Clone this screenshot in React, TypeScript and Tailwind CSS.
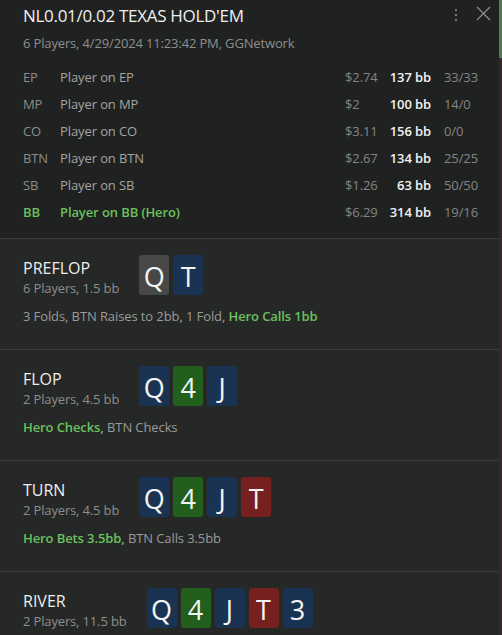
import React from 'react';

type Suit = 'gray' | 'blue' | 'green' | 'red';

const cardColor: Record<Suit, string> = {
  gray: 'bg-[#484848]',
  blue: 'bg-[#1b3353]',
  green: 'bg-[#225f1c]',
  red: 'bg-[#76201f]',
};

const players = [
  { pos: 'EP', name: 'Player on EP', money: '$2.74', bb: '137 bb', stats: '33/33' },
  { pos: 'MP', name: 'Player on MP', money: '$2', bb: '100 bb', stats: '14/0' },
  { pos: 'CO', name: 'Player on CO', money: '$3.11', bb: '156 bb', stats: '0/0' },
  { pos: 'BTN', name: 'Player on BTN', money: '$2.67', bb: '134 bb', stats: '25/25' },
  { pos: 'SB', name: 'Player on SB', money: '$1.26', bb: '63 bb', stats: '50/50' },
  { pos: 'BB', name: 'Player on BB (Hero)', money: '$6.29', bb: '314 bb', stats: '19/16', hero: true },
];

const streets: {
  name: string;
  sub: string;
  cards: [string, Suit][];
  action?: { text: string; hero?: boolean }[];
}[] = [
  {
    name: 'PREFLOP',
    sub: '6 Players, 1.5 bb',
    cards: [
      ['Q', 'gray'],
      ['T', 'blue'],
    ],
    action: [{ text: '3 Folds, BTN Raises to 2bb, 1 Fold, ' }, { text: 'Hero Calls 1bb', hero: true }],
  },
  {
    name: 'FLOP',
    sub: '2 Players, 4.5 bb',
    cards: [
      ['Q', 'blue'],
      ['4', 'green'],
      ['J', 'blue'],
    ],
    action: [{ text: 'Hero Checks,', hero: true }, { text: ' BTN Checks' }],
  },
  {
    name: 'TURN',
    sub: '2 Players, 4.5 bb',
    cards: [
      ['Q', 'blue'],
      ['4', 'green'],
      ['J', 'blue'],
      ['T', 'red'],
    ],
    action: [{ text: 'Hero Bets 3.5bb,', hero: true }, { text: ' BTN Calls 3.5bb' }],
  },
  {
    name: 'RIVER',
    sub: '2 Players, 11.5 bb',
    cards: [
      ['Q', 'blue'],
      ['4', 'green'],
      ['J', 'blue'],
      ['T', 'red'],
      ['3', 'blue'],
    ],
  },
];

const Card = ({ rank, suit }: { rank: string; suit: Suit }) => (
  <div
    className={`flex h-10 w-[30px] items-center justify-center rounded-[3px] pt-[3px] text-[27px] leading-none text-[#f4f4f4] ${cardColor[suit]}`}
  >
    {rank}
  </div>
);

export default function App() {
  return (
    <div className="flex min-h-screen w-[502px] bg-[#252826] font-['Open_Sans',sans-serif]">
      <div className="w-[499px]">
        {/* header */}
        <div className="border-b border-[#3b3e3b] bg-[#1f2220] pb-3 pl-[23px] pr-[8px] pt-1">
          <div className="flex items-start justify-between">
            <h1 className="text-[17px] leading-6 tracking-[-0.3px] text-[#efefef]">NL0.01/0.02 TEXAS HOLD'EM</h1>
            <div className="flex items-center gap-[18px] pt-[1px]">
              <svg width="4" height="14" viewBox="0 0 4 14" className="mt-[3px]">
                <circle cx="2" cy="2" r="1.1" fill="#8c8c8c" />
                <circle cx="2" cy="7" r="1.1" fill="#8c8c8c" />
                <circle cx="2" cy="12" r="1.1" fill="#8c8c8c" />
              </svg>
              <svg width="15" height="15" viewBox="0 0 15 15">
                <path d="M1 1 L14 14 M14 1 L1 14" stroke="#8f8f8f" strokeWidth="1.2" />
              </svg>
            </div>
          </div>
          <p className="mt-[6px] text-[13px] leading-[18px] tracking-[-0.15px] text-[#8e8e8e]">
            6 Players, 4/29/2024 11:23:42 PM, GGNetwork
          </p>
          <div className="mt-3">
            {players.map((p) => (
              <div key={p.pos} className="flex h-[27px] items-center text-[13px] tracking-[-0.1px]">
                <span className={`w-[37px] ${p.hero ? 'font-semibold text-[#6cc05e]' : 'text-[#8d8d8d]'}`}>{p.pos}</span>
                <span className={`flex-1 ${p.hero ? 'font-semibold text-[#6cc05e]' : 'text-[#a4a4a4]'}`}>{p.name}</span>
                <span className="w-[44px] text-[#858585]">{p.money}</span>
                <span className="w-[42px] text-right font-semibold text-[#f2f2f2]">{p.bb}</span>
                <span className="ml-[13px] w-[47px] text-[#858585]">{p.stats}</span>
              </div>
            ))}
          </div>
        </div>

        {streets.map((s) => (
          <div key={s.name} className="border-b border-[#3b3e3b] px-[23px] pb-6 pt-4">
            <div className="flex h-10 items-start gap-5">
              <div className="pt-[2px]">
                <div className="text-[16px] leading-[22px] text-[#eeeeee]">{s.name}</div>
                <div className="text-[13px] leading-[18px] tracking-[-0.15px] text-[#8e8e8e]">{s.sub}</div>
              </div>
              <div className="flex gap-1">
                {s.cards.map(([r, suit], i) => (
                  <Card key={i} rank={r} suit={suit} />
                ))}
              </div>
            </div>
            {s.action && (
              <p className="mt-3 text-[13px] leading-[18px] tracking-[-0.1px] text-[#9a9a9a]">
                {s.action.map((a, i) =>
                  a.hero ? (
                    <span key={i} className="font-semibold text-[#6cc05e]">
                      {a.text}
                    </span>
                  ) : (
                    <span key={i}>{a.text}</span>
                  )
                )}
              </p>
            )}
          </div>
        ))}
      </div>
      {/* scroll strip */}
      <div className="flex w-[3px] flex-col">
        <div className="h-[58px] bg-[#4e7d52]" />
        <div className="flex-1 bg-[#34282a]" />
      </div>
    </div>
  );
}
